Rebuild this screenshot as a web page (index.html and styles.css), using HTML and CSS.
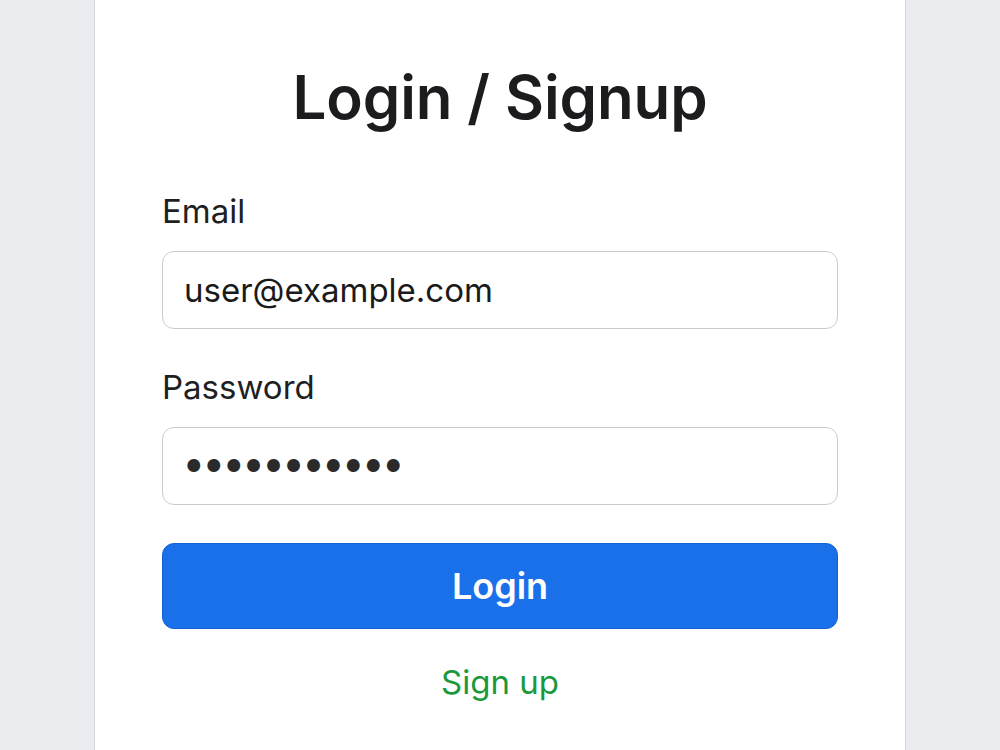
FILE: index.html
```html
<!DOCTYPE html>
<html lang="en">
<head>
<meta charset="utf-8">
<title>Login / Signup</title>
<link rel="stylesheet" href="styles.css">
</head>
<body>
<main class="card">
  <h1 class="title">Login / Signup</h1>
  <form class="form">
    <label class="label" for="email">Email</label>
    <input class="field" id="email" type="text" value="user@example.com">
    <label class="label label-pw" for="pw">Password</label>
    <div class="field field-pw" id="pw">●●●●●●●●●●●</div>
    <button class="btn" type="button">Login</button>
    <a class="signup" href="#">Sign up</a>
  </form>
</main>
</body>
</html>
```
FILE: styles.css
```css
* { box-sizing: border-box; }
html, body { margin: 0; height: 100%; }
body {
  background: #e9ebef;
  font-family: Inter, "Noto Sans", "Liberation Sans", sans-serif;
  color: #1f1f1f;
}
.card {
  width: 812px;
  min-height: 100vh;
  margin: 0 auto;
  background: #ffffff;
  border-left: 1px solid #d6d8dd;
  border-right: 1px solid #d6d8dd;
  padding: 61px 67px 0;
}
.title {
  margin: 0;
  font-size: 60px;
  line-height: 72px;
  font-weight: 600;
  text-align: center;
  color: #1c1c1e;
  letter-spacing: -0.1px;
}
.form {
  display: flex;
  flex-direction: column;
  margin-top: 58px;
}
.label {
  font-size: 33px;
  line-height: 40px;
  margin-bottom: 20px;
  color: #1f1f1f;
}
.label-pw { margin-top: 38px; }
.field {
  height: 78px;
  width: 100%;
  border: 1.5px solid #c9cbcf;
  border-radius: 12px;
  padding: 0 21px;
  font-family: inherit;
  font-size: 33px;
  color: #1a1a1a;
  background: #fff;
  outline: none;
}
.field-pw {
  display: flex;
  align-items: center;
  font-size: 17px;
  letter-spacing: 4.4px;
  color: #2a2a2a;
  padding-left: 23px;
}
.btn {
  margin-top: 38px;
  height: 86px;
  width: 100%;
  border: 1px solid #1562d6;
  border-radius: 12px;
  background: #1a70e9;
  color: #fff;
  font-family: inherit;
  font-size: 36px;
  font-weight: 600;
  cursor: pointer;
}
.signup {
  margin-top: 33px;
  align-self: center;
  font-size: 33px;
  line-height: 40px;
  color: #19993b;
  text-decoration: none;
}
```
